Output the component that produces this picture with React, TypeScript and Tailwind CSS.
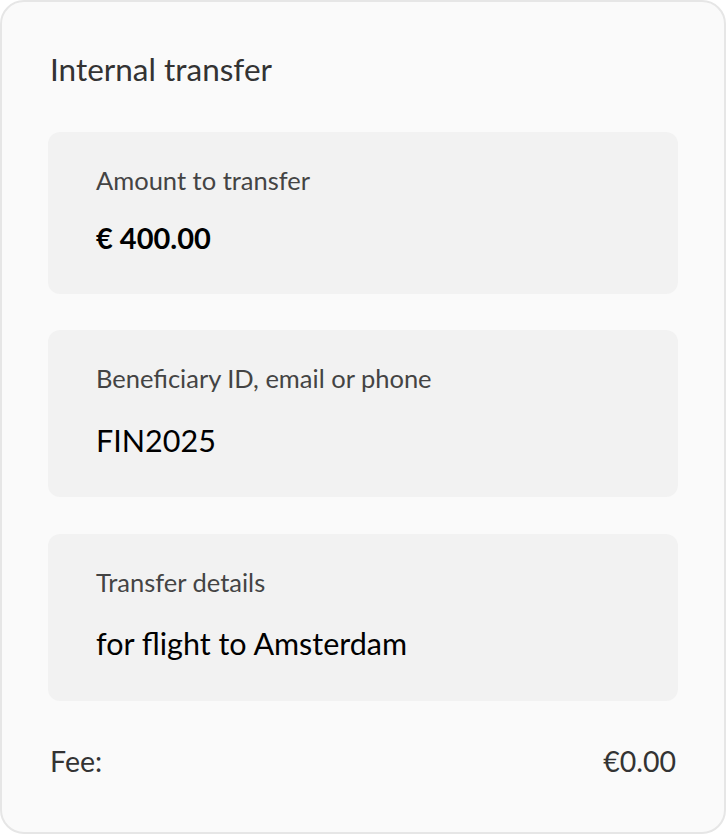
export default function App() {
    const fields = [
        { label: 'Amount to transfer', value: '€ 400.00', bold: true, box: 'h-[162px]', gap: 'mt-[22px]' },
        { label: 'Beneficiary ID, email or phone', value: 'FIN2025', bold: false, box: 'h-[167px] mt-[36px]', gap: 'mt-[26px]' },
        { label: 'Transfer details', value: 'for flight to Amsterdam', bold: false, box: 'h-[167px] mt-[37px]', gap: 'mt-[25px]' },
    ];

    return (
        <div className="w-[726px] h-[834px] bg-white" style={{ fontFamily: '"Lato", "Noto Sans", sans-serif' }}>
            <div className="w-full h-full rounded-[24px] border-2 border-[#e6e6e6] bg-[#fafafa] px-[46px] pt-[47px]">
                <h1 className="text-[31.5px] leading-[40px] text-[#333333] ml-[2px]">Internal transfer</h1>

                <div className="mt-[43px] flex flex-col">
                    {fields.map((f) => (
                        <div key={f.label} className={`${f.box} rounded-[12px] bg-[#f2f2f2] pl-[48px] pt-[32px]`}>
                            <div className="text-[25.5px] leading-[32px] text-[#444444]">{f.label}</div>
                            <div
                                className={`${f.gap} leading-[40px] text-black ${
                                    f.bold ? 'text-[29px] font-bold' : 'text-[30.5px]'
                                }`}
                            >
                                {f.value}
                            </div>
                        </div>
                    ))}
                </div>

                {/* Fee */}
                <div className="mt-[40px] flex items-center justify-between text-[28.5px] leading-[40px] text-[#333333] pl-[2px] pr-[2px]">
                    <span>Fee:</span>
                    <span>€0.00</span>
                </div>
            </div>
        </div>
    );
}
